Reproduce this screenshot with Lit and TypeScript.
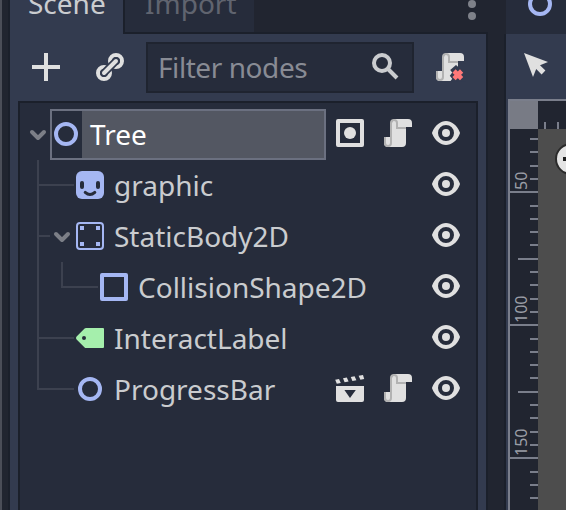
import { LitElement, html, css, svg, nothing, TemplateResult } from "lit";
import { customElement, property } from "lit/decorators.js";
import { classMap } from "lit/directives/class-map.js";

const scrollBody = svg`
  <path fill="#e0e0e0" d="M6 1a2 2 0 0 0-1 2v7H1v3a2 2 0 0 0 2 2h7a2 2 0 0 0 2-2V5h3V3a2 2 0 0 0-2-2z"/>
  <path fill="#b2b2b2" d="M6 1a2 2 0 0 0-2 2v10a1 1 0 0 1-2 0v-3H1v3a2 2 0 0 0 4 0V3a1 1 0 0 1 2 0v3h5V5H8V3a2 2 0 0 0-2-2z"/>`;

const icons: Record<string, TemplateResult> = {
  node: svg`<circle cx="8" cy="8" r="5" fill="none" stroke="#a5b7f3" stroke-width="2"/>`,
  sprite: svg`<path fill="#a5b7f3" d="M4 1h8a3 3 0 0 1 3 3v8a3 3 0 0 1-3 3H4a3 3 0 0 1-3-3V4a3 3 0 0 1 3-3z"/>
    <g fill="#262c3b"><rect x="3" y="6" width="2" height="4" rx="1"/><rect x="11" y="6" width="2" height="4" rx="1"/></g>
    <path d="M5.600 11.700q2.400 2.100 4.800 0" fill="none" stroke="#262c3b" stroke-width="1.500" stroke-linecap="round"/>`,
  body: svg`<rect x="1.500" y="1.500" width="13" height="13" rx="1.500" fill="none" stroke="#a5b7f3"/>
    <path fill="#a5b7f3" d="M3 3h2v2H3zM11 3h2v2h-2zM3 11h2v2H3zM11 11h2v2h-2z"/>`,
  shape: svg`<path fill="none" stroke="#a5b7f3" stroke-width="2" stroke-linejoin="round" d="M2 2h12v12H2z"/>`,
  label: svg`<path fill="#a5efac" fill-rule="evenodd" d="M6 3a1 1 0 0 0-.7.3l-4 4a1 1 0 0 0 0 1.400l4 4A1 1 0 0 0 6 13h8.500a.5.5 0 0 0 .5-.5v-9a.5.5 0 0 0-.5-.5zM5 7a1 1 0 1 1 0 2 1 1 0 0 1 0-2z"/>`,
  eye: svg`<path fill="#e0e0e0" fill-rule="evenodd" d="M8 2C5.400 2 2.500 4 1.100 7.600a1 1 0 0 0 0 .8C2.500 12 5.400 14 8 14s5.600-2 6.900-5.600a1 1 0 0 0 0-.8C13.600 4 10.600 2 8 2zm0 2a4 4 0 1 1 0 8 4 4 0 0 1 0-8zm0 2a2 2 0 1 0 0 4 2 2 0 0 0 0-4z"/>`,
  script: scrollBody,
  scriptRemove: svg`${scrollBody}
    <path fill="#333b4f" d="M12 6.300v1.600l-1-.9-2.900 2.500 1 1.300-1.200 1.600 1.200 1.500-.9 1.200H16V6z"/>
    <path d="M10 10l3.800 3.800M13.800 10L10 13.800" stroke="#ff7878" stroke-width="2.300" fill="none"/>`,
  unique: svg`<path fill="none" stroke="#e0e0e0" stroke-width="2" stroke-linejoin="round" d="M2 2h12v12H2z"/><circle cx="8" cy="8" r="3" fill="#e0e0e0"/>`,
  scene: svg`<path fill="#e0e0e0" fill-rule="evenodd" d="M1 7h14v7a1 1 0 0 1-1 1H2a1 1 0 0 1-1-1zM5.200 9L8 13l2.900-4z"/>
    <path fill="#e0e0e0" d="M.6 3.900l1.900-.4.900 2-2 .4zM4.500 3.100l1.900-.4.900 2-2 .4zM8.400 2.500l1.900-.4.900 2-2 .4zM12.300 1.900l2.200-.4.600 2-1.900.4z"/>`,
  plus: svg`<path fill="#e0e0e0" d="M7 1h2v6h6v2H9v6H7V9H1V7h6z"/>`,
  link: svg`<g fill="none" stroke-linecap="round"><circle cx="11" cy="5" r="3" stroke="#e0e0e0" stroke-width="2"/><circle cx="5" cy="11" r="3" stroke="#e0e0e0" stroke-width="2"/>
    <path d="M5 11l6-6" stroke="#333b4f" stroke-width="3.800"/><path d="M5 11l6-6" stroke="#e0e0e0" stroke-width="2"/></g>`,
  search: svg`<circle cx="6" cy="6" r="4" fill="none" stroke="#cacccf" stroke-width="2"/><path d="M9 9l4.500 4.500" stroke="#cacccf" stroke-width="2"/>`,
  fold: svg`<path d="M5 7l3 3 3-3" fill="none" stroke="#7c7f87" stroke-width="2" stroke-linecap="round" stroke-linejoin="round"/>`,
  cursor: svg`<path fill="#e0e0e0" d="M1 1l4.500 12 1.600-4 2.700 2.700 1.900-1.900L9 7.100 13 5.500z"/>`,
};

@customElement("ui-icon")
class UiIcon extends LitElement {
  @property() name = "node";
  static styles = css`
    :host { display: block; flex: none; width: 32px; height: 32px; }
    svg { display: block; width: 32px; height: 32px; }
  `;
  render() {
    return html`<svg viewBox="0 0 16 16">${icons[this.name]}</svg>`;
  }
}

interface Row {
  label: string;
  icon: string;
  depth: number;
  fold?: boolean;
  selected?: boolean;
  extras?: string[];
}

const rows: Row[] = [
  { label: "Tree", icon: "node", depth: 0, fold: true, selected: true, extras: ["unique", "script"] },
  { label: "graphic", icon: "sprite", depth: 1 },
  { label: "StaticBody2D", icon: "body", depth: 1, fold: true },
  { label: "CollisionShape2D", icon: "shape", depth: 2 },
  { label: "InteractLabel", icon: "label", depth: 1 },
  { label: "ProgressBar", icon: "node", depth: 1, extras: ["scene", "script"] },
];

@customElement("scene-tree")
class SceneTree extends LitElement {
  static styles = css`
    :host {
      display: block; position: relative; flex: 1; margin: 0 8px; padding-top: 6px;
      border: 2px solid #1b202b; border-bottom: 0; background: #262c3b;
    }
    .row { display: flex; height: 51px; padding-right: 14px; }
    .fold { width: 24px; margin-left: 6px; display: flex; justify-content: center; padding-top: 9px; box-sizing: border-box; }
    .d1 .fold { margin-left: 30px; }
    .d2 .fold { margin-left: 54px; }
    .item { box-sizing: border-box; width: 276px; display: flex; position: relative; }
    .d1 .item { width: 252px; }
    .d2 .item { width: 228px; }
    .item ui-icon { margin-top: 9px; }
    .text { padding-left: 8px; flex: 1; line-height: 51px; white-space: nowrap; color: #cacccf; }
    .selected .item { border: 2px solid #6b7080; }
    .selected .item ui-icon { margin: 7px 0 0 -2px; }
    .selected .text { line-height: 47px; background: #535762; color: #fff; }
    .buttons { display: flex; margin-left: auto; gap: 16px; padding-top: 8px; }
    .guides { position: absolute; left: 0; top: 0; width: 90px; height: 300px; }
  `;
  render() {
    return html`
      <svg class="guides" viewBox="0 0 90 300">
        <path fill="none" stroke="#3c414f" stroke-width="2"
          d="M18 57V287M17 82H54M17 133H30M17 235H54M17 286H54M42 159V184H78"/>
      </svg>
      ${rows.map((r) => html`
        <div class=${classMap({ row: true, selected: !!r.selected, d1: r.depth === 1, d2: r.depth === 2 })}>
          <div class="fold">${r.fold ? html`<ui-icon name="fold"></ui-icon>` : nothing}</div>
          <div class="item"><ui-icon name=${r.icon}></ui-icon><div class="text">${r.label}</div></div>
          <div class="buttons">
            ${(r.extras ?? []).map((n) => html`<ui-icon name=${n}></ui-icon>`)}
            <ui-icon name="eye"></ui-icon>
          </div>
        </div>`)}
    `;
  }
}

@customElement("canvas-view")
class CanvasView extends LitElement {
  static styles = css`
    :host { display: flex; flex-direction: column; width: 62px; background: #333b4f; overflow: hidden; }
    .tab { height: 34px; background: #262c3b; border-left: 2px solid #212530; flex: none; overflow: hidden; }
    .tab ui-icon { margin: -12px 0 0 18px; }
    .tools { height: 65px; flex: none; border-left: 2px solid #1b202b; box-sizing: border-box; }
    .tools ui-icon { margin: 17px 0 0 16px; }
    .lower { flex: 1; display: flex; border-left: 2px solid #1b202b; padding-left: 2px; }
    .view { flex: 1; display: grid; grid-template: 28px 1fr / 28px 1fr; border: solid #7a7e8b; border-width: 2px 0 0 2px; }
    .corner { background: #787b85; }
    .ruler { background: #212530; overflow: hidden; }
    .ruler svg { display: block; }
    .area { background: #4d4d4d; overflow: hidden; position: relative; }
    .area svg { position: absolute; left: 0; top: 0; }
    text { font: 16px "Noto Sans", sans-serif; fill: #9a9da6; }
  `;
  render() {
    const ticks = Array.from({ length: 28 }, (_, i) => {
      const y = Math.round(10 + i * 13.3) - 1;
      const k = (i + 6) % 10;
      const w = k === 0 ? 28 : k === 5 ? 20 : 8;
      return svg`<rect x=${28 - w} y=${y} width=${w} height="2"/>`;
    });
    return html`
      <div class="tab"><ui-icon name="node"></ui-icon></div>
      <div class="tools"><ui-icon name="cursor"></ui-icon></div>
      <div class="lower"><div class="view">
        <div class="corner"></div>
        <div class="ruler"><svg width="28" height="28" fill="#7a7e8b"><path d="M6 21h2v7H6zM19 21h2v7h-2z"/></svg></div>
        <div class="ruler"><svg width="28" height="381" fill="#7a7e8b">${ticks}
          <text transform="translate(17 61) rotate(-90)">50</text>
          <text transform="translate(17 194) rotate(-90)">100</text>
          <text transform="translate(17 327) rotate(-90)">150</text></svg></div>
        <div class="area"><svg width="28" height="60"><circle cx="33" cy="30" r="15" fill="#e4e4e4" stroke="#2b2b2b" stroke-width="2"/><path fill="#202020" d="M25 28h5v4h-5z"/></svg></div>
      </div></div>
    `;
  }
}

@customElement("app-root")
class AppRoot extends LitElement {
  static styles = css`
    :host {
      display: flex; width: 566px; height: 510px; overflow: hidden; box-sizing: border-box;
      background: #212530; border-left: 2px solid #4b4e58; padding-left: 6px;
      font: 28px "Noto Sans", sans-serif; color: #cacccf;
    }
    .dock { width: 480px; display: flex; flex-direction: column; margin-right: 16px; flex: none; }
    .tabs { display: flex; height: 34px; flex: none; }
    .tab { box-sizing: border-box; overflow: hidden; }
    .tab span { display: block; line-height: 38px; margin-top: -16px; }
    .active { width: 115px; padding-left: 18px; background: #333b4f; border-left: 2px solid #1b202b; }
    .idle { width: 131px; padding-left: 20px; color: #60646f; background: #262c3b; border: solid #1b202b; border-width: 0 0 2px 2px; }
    .rest { flex: 1; border-bottom: 2px solid #1b202b; display: flex; justify-content: flex-end; }
    .panel { flex: 1; display: flex; flex-direction: column; background: #333b4f; border: solid #1b202b; border-width: 0 2px; }
    .bar { display: flex; height: 67px; flex: none; padding: 8px 0 0 20px; box-sizing: border-box; }
    .bar > ui-icon { margin: 9px 32px 0 0; }
    .bar > ui-icon:last-child { margin-right: 0; }
    .filter { box-sizing: border-box; flex: none; width: 268px; height: 51px; margin: 0 20px 0 -12px; display: flex; justify-content: space-between; padding: 0 10px; border: 2px solid #1f2430; background: #262c3b; color: #888b94; }
    .filter span { line-height: 47px; letter-spacing: -0.43px; }
    .filter ui-icon { margin: 7px 0 0; }
  `;
  render() {
    return html`
      <div class="dock">
        <div class="tabs">
          <div class="tab active"><span>Scene</span></div>
          <div class="tab idle"><span>Import</span></div>
          <div class="rest"><svg width="24" height="30" fill="#7e8189"><circle cx="8" cy="4" r="4"/><circle cx="8" cy="16" r="4"/></svg></div>
        </div>
        <div class="panel">
          <div class="bar">
            <ui-icon name="plus"></ui-icon>
            <ui-icon name="link"></ui-icon>
            <div class="filter"><span>Filter nodes</span><ui-icon name="search"></ui-icon></div>
            <ui-icon name="scriptRemove"></ui-icon>
          </div>
          <scene-tree></scene-tree>
        </div>
      </div>
      <canvas-view></canvas-view>
    `;
  }
}
